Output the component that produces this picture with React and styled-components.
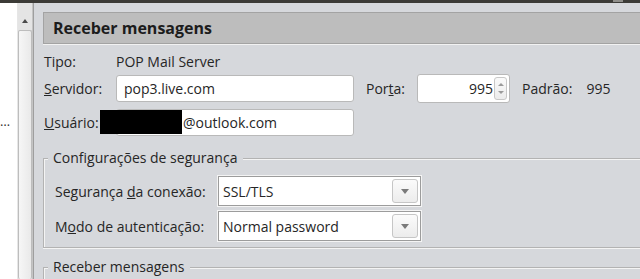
import React from "react";
import styled, { createGlobalStyle } from "styled-components";

const Global = createGlobalStyle`
  html, body { margin: 0; padding: 0; }
  body {
    width: 640px; height: 279px; overflow: hidden;
    background: #d6d8dc;
    font-family: "Open Sans", "DejaVu Sans", sans-serif;
    font-size: 14px; color: #262626;
  }
`;

const Window = styled.div`
  width: 640px; height: 279px; display: flex; flex-direction: column; overflow: hidden;
`;

const TopStrip = styled.div`
  height: 3px; background: #3c3b37; flex: none; display: flex; justify-content: flex-end;
`;

const StripThumb = styled.div`
  width: 10px; height: 2px; background: #8f8e8a; margin-right: 17px;
`;

const Body = styled.div`
  flex: 1; display: flex; min-height: 0;
`;

const ListPane = styled.div`
  width: 17px; background: #fff; border-right: 1px solid #e6e6e6; position: relative;
`;

const Ellipsis = styled.span`
  position: absolute; left: 0; top: 109px; font-size: 13px; color: #333;
`;

const Scrollbar = styled.div`
  width: 14px; background: #e4e4e4; border-right: 1px solid #c4c4c4; box-shadow: 1px 0 0 #9e9e9e;
  display: flex; flex-direction: column; align-items: center;
`;

const Arrow = styled.div`
  margin-top: 16px; width: 0; height: 0;
  border-left: 3px solid transparent; border-right: 3px solid transparent;
  border-bottom: 4px solid #4a4a4a;
`;

const Thumb = styled.div`
  margin-top: 7px; width: 12px; flex: 1;
  background: linear-gradient(to right, #f6f6f6, #e9e9e9);
  border: 1px solid #bdbdbd; border-radius: 2px; border-bottom: none;
`;

const Main = styled.div`
  flex: 1; margin-left: 10px; padding-top: 9px; display: flex; flex-direction: column; min-width: 0;
`;

const Header = styled.div`
  flex: none; height: 32px; box-sizing: border-box; background: #bdbdbd;
  border: 1px solid #a3a3a3; border-right: none;
  box-shadow: 0 1px 0 #f2f2f2;
  display: flex; align-items: center; padding-left: 9px;
  font-size: 16px; font-weight: 700; color: #1c1c1c;
`;

const Row = styled.div`
  flex: none; display: flex; align-items: center;
  height: ${p => p.$h || 29}px; margin-top: ${p => p.$mt || 0}px;
  position: relative;
`;

const Label = styled.span`
  width: ${p => p.$w || 72}px; padding-left: 1px; flex: none; white-space: nowrap;
`;

const Value = styled.span`
  margin-left: ${p => p.$ml || 0}px; white-space: nowrap;
`;

const U = styled.span`text-decoration: underline;`;

const TextInput = styled.div`
  flex: none; box-sizing: border-box; width: 238px; height: 27px;
  background: #fff; border: 1px solid #b9b9b9; border-radius: 3px;
  display: flex; align-items: center; padding-left: ${p => p.$pl || 7}px;
`;

const Redact = styled.div`
  position: absolute; left: 57px; top: 2px; width: 82px; height: 24px; background: #000;
`;

const Spin = styled.div`
  flex: none; margin-left: 12px; width: 93px; height: 29px; box-sizing: border-box;
  background: #fff; border: 1px solid #b9b9b9; border-radius: 3px;
  display: flex; align-items: center; justify-content: flex-end; padding-right: 2px; gap: 1px;
`;

const SpinButtons = styled.div`
  width: 13px; height: 23px; box-sizing: border-box; border: 1px solid #c8c8c8; border-radius: 3px;
  background: linear-gradient(#fafafa, #ececec);
  display: flex; flex-direction: column; align-items: center; justify-content: space-evenly;
`;

const Tri = styled.div`
  width: 0; height: 0; border-left: 3px solid transparent; border-right: 3px solid transparent;
  ${p => p.$up ? "border-bottom: 3px solid #9a9a9a;" : "border-top: 3px solid #9a9a9a;"}
`;

const Group = styled.div`
  flex: none; margin-top: ${p => p.$mt}px; position: relative;
  border: 1px solid #b3b3b3; border-right: none;
  box-shadow: inset 1px 1px 0 #f4f4f4, 0 1px 0 #f4f4f4;
  height: ${p => p.$h}px; padding: 17px 0 0 10px;
`;

const Legend = styled.span`
  position: absolute; left: 4px; top: -11px; padding: 0 6px 0 5px; background: #d6d8dc; line-height: 20px;
  white-space: nowrap;
`;

const Combo = styled.div`
  flex: none; width: 203px; height: 30px; box-sizing: border-box; background: #fff;
  border: 1px solid #9c9c9c; box-shadow: 0 0 0 1px #f4f4f4;
  display: flex; align-items: center; justify-content: space-between; padding: 0 2px 0 4px;
`;

const DropBtn = styled.div`
  width: 26px; height: 24px; box-sizing: border-box; border: 1px solid #c6c6c6; border-radius: 3px;
  background: linear-gradient(#fbfbfb, #ececec); display: flex; align-items: center; justify-content: center;
`;

const DownTri = styled.div`
  width: 0; height: 0; border-left: 4px solid transparent; border-right: 4px solid transparent;
  border-top: 5px solid #7a7a7a;
`;

export default function App() {
  return (
    <>
      <Global />
      <Window>
        <TopStrip><StripThumb /></TopStrip>
        <Body>
          <ListPane><Ellipsis>…</Ellipsis></ListPane>
          <Scrollbar>
            <Arrow />
            <Thumb />
          </Scrollbar>
          <Main>
            <Header>Receber mensagens</Header>
            <Row $h={20} $mt={7}>
              <Label>Tipo:</Label>
              <Value>POP Mail Server</Value>
            </Row>
            <Row $mt={3}>
              <Label><U>S</U>ervidor:</Label>
              <TextInput>pop3.live.com</TextInput>
              <Value $ml={12}>Por<U>t</U>a:</Value>
              <Spin>
                <span>995</span>
                <SpinButtons><Tri $up /><Tri /></SpinButtons>
              </Spin>
              <Value $ml={12}>Padrão:</Value>
              <Value $ml={14}>995</Value>
            </Row>
            <Row $mt={5}>
              <Label><U>U</U>suário:</Label>
              <TextInput $pl={66}>@outlook.com</TextInput>
              <Redact />
            </Row>
            <Group $mt={21} $h={71}>
              <Legend>Configurações de segurança</Legend>
              <Row $h={30}>
                <Label $w={163}>Segurança <U>d</U>a conexão:</Label>
                <Combo>SSL/TLS<DropBtn><DownTri /></DropBtn></Combo>
              </Row>
              <Row $h={30} $mt={5}>
                <Label $w={163}>M<U>o</U>do de autenticação:</Label>
                <Combo>Normal password<DropBtn><DownTri /></DropBtn></Combo>
              </Row>
            </Group>
            <Group $mt={19} $h={40}>
              <Legend>Receber mensagens</Legend>
            </Group>
          </Main>
        </Body>
      </Window>
    </>
  );
}
